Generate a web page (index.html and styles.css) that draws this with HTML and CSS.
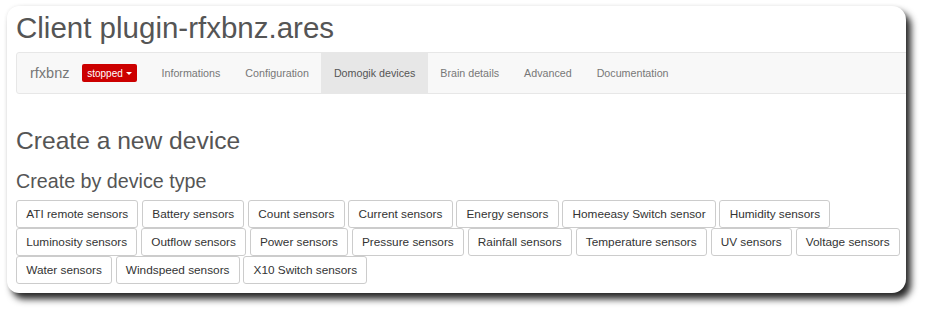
FILE: index.html
```html
<!DOCTYPE html>
<html>
<head>
<meta charset="utf-8">
<link rel="stylesheet" href="styles.css">
</head>
<body>
<div class="card">
  <div class="inner">
    <h1 class="title">Client plugin-rfxbnz.ares</h1>
    <nav class="navbar">
      <span class="brand">rfxbnz</span>
      <span class="status">stopped <span class="caret"></span></span>
      <ul class="nav">
        <li class="nav-item">Informations</li>
        <li class="nav-item">Configuration</li>
        <li class="nav-item active">Domogik devices</li>
        <li class="nav-item">Brain details</li>
        <li class="nav-item">Advanced</li>
        <li class="nav-item">Documentation</li>
      </ul>
    </nav>
    <h2 class="h2">Create a new device</h2>
    <h3 class="h3">Create by device type</h3>
    <div class="buttons">
      <span class="btn">ATI remote sensors</span>
      <span class="btn">Battery sensors</span>
      <span class="btn">Count sensors</span>
      <span class="btn">Current sensors</span>
      <span class="btn">Energy sensors</span>
      <span class="btn">Homeeasy Switch sensor</span>
      <span class="btn">Humidity sensors</span>
      <span class="btn">Luminosity sensors</span>
      <span class="btn">Outflow sensors</span>
      <span class="btn">Power sensors</span>
      <span class="btn">Pressure sensors</span>
      <span class="btn">Rainfall sensors</span>
      <span class="btn">Temperature sensors</span>
      <span class="btn">UV sensors</span>
      <span class="btn">Voltage sensors</span>
      <span class="btn">Water sensors</span>
      <span class="btn">Windspeed sensors</span>
      <span class="btn">X10 Switch sensors</span>
    </div>
  </div>
</div>
</body>
</html>
```
FILE: styles.css
```css
html, body {
  margin: 0;
  padding: 0;
  background: #ffffff;
}
body {
  font-family: "Liberation Sans", Arial, sans-serif;
  width: 930px;
  height: 318px;
  overflow: hidden;
}
.card {
  margin: 6px 0 0 7px;
  width: 899px;
  height: 287px;
  background: #fff;
  border-radius: 12px 14px 14px 12px;
  box-shadow: 5px 6px 7px rgba(0,0,0,0.85), 0 0 4px rgba(0,0,0,0.07);
  overflow: hidden;
}
.inner {
  width: 912px;
  padding: 5px 0 0 9px;
}
.title {
  margin: 0;
  font-size: 29.5px;
  line-height: 33px;
  font-weight: normal;
  color: #555;
}
.navbar {
  margin-top: 8px;
  height: 40px;
  border: 1px solid #e7e7e7;
  border-radius: 3px;
  background: #f8f8f8;
  display: flex;
  align-items: center;
  padding-left: 13px;
}
.brand {
  font-size: 14.5px;
  color: #777;
  line-height: 40px;
}
.status {
  margin-left: 12.5px;
  height: 18px;
  width: 55px;
  box-sizing: border-box;
  background: #c00;
  color: #fff;
  border-radius: 2px;
  font-size: 10px;
  display: inline-flex;
  align-items: center;
  justify-content: center;
  gap: 3px;
}
.caret {
  width: 0;
  height: 0;
  border-left: 3px solid transparent;
  border-right: 3px solid transparent;
  border-top: 3px solid #fff;
}
.nav {
  list-style: none;
  margin: 0 0 0 12px;
  padding: 0;
  display: flex;
  height: 40px;
}
.nav-item {
  padding: 0 12.5px;
  line-height: 40px;
  font-size: 10.7px;
  color: #777;
}
.nav-item.active {
  background: #e7e7e7;
  color: #555;
}
.h2 {
  margin: 33px 0 0 0;
  font-size: 24.6px;
  line-height: 27px;
  font-weight: normal;
  color: #555;
}
.h3 {
  margin: 16px 0 0 0;
  font-size: 19.7px;
  line-height: 22px;
  font-weight: normal;
  color: #555;
}
.buttons {
  margin-top: 8px;
  display: flex;
  flex-wrap: wrap;
  column-gap: 3.7px;
  row-gap: 0;
}
.btn {
  box-sizing: border-box;
  height: 28px;
  line-height: 26px;
  padding: 0 9.2px;
  border: 1px solid #ccc;
  border-radius: 3px;
  font-size: 11.8px;
  color: #333;
  background: #fff;
  white-space: nowrap;
}
```
